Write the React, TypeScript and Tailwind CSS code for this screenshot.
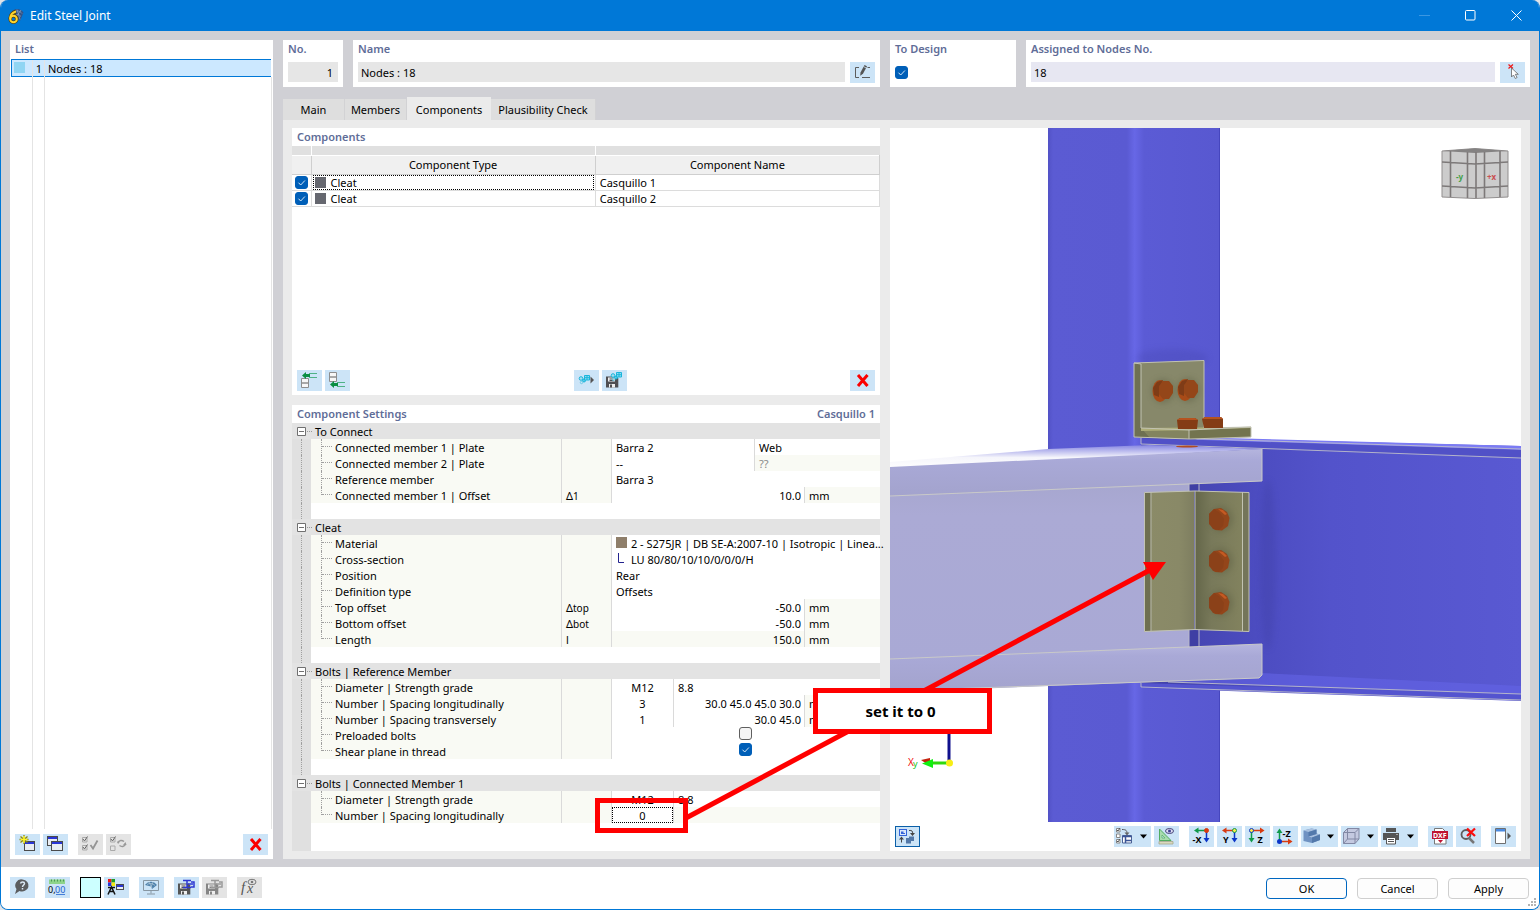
import type { ReactNode } from "react";
import clsx from "clsx";

type IconButtonProps = {
  label: string;
  children?: ReactNode;
  muted?: boolean;
  wide?: boolean;
  active?: boolean;
};

function IconButton({ label, children, muted, wide, active }: IconButtonProps) {
  return (
    <button
      type="button"
      aria-label={label}
      disabled={muted}
      className={clsx(
        "relative h-[21px] shrink-0",
        wide ? "w-[37px]" : "w-[25px]",
        muted ? "bg-[#e4e4e4]" : "bg-[#cce4f7]",
        active && "outline outline-1 -outline-offset-1 outline-[#0a5fa8]",
      )}
    >
      <svg className="block h-full w-full" viewBox={wide ? "0 0 37 21" : "0 0 25 21"} aria-hidden="true">
        {children}
        {wide && <path d="M26 8.500h7l-3.500 4z" fill="#000" />}
      </svg>
    </button>
  );
}

function Check({ label, checked = false }: { label: string; checked?: boolean }) {
  return (
    <span className="relative block size-[13px]">
      <input
        type="checkbox"
        aria-label={label}
        defaultChecked={checked}
        className="peer block size-[13px] appearance-none rounded-[3px] border border-[#5f5f5f] bg-[#f5f5f5] checked:border-[#005fb8] checked:bg-[#005fb8]"
      />
      <svg className="pointer-events-none absolute inset-0 hidden peer-checked:block" viewBox="0 0 13 13" fill="none" stroke="#d5e6f5">
        <path d="M3.500 6.700l2.200 2.300 4.200-4.500" />
      </svg>
    </span>
  );
}

function RedCross() {
  return <path d="M8 5l9.500 11M17.500 5L8 16" stroke="#fb0000" strokeWidth="3" fill="none" />;
}

function MiniWindow({ x, y, w = 11, h = 10 }: { x: number; y: number; w?: number; h?: number }) {
  return (
    <g>
      <rect x={x + 0.5} y={y + 0.5} width={w - 1} height={h - 1} fill="#e9edf2" stroke="#4b4b4b" />
      <rect x={x + 1} y={y + 1} width={w - 2} height="2" fill="#2a36d6" />
    </g>
  );
}

function Floppy({ color, badge }: { color: string; badge: ReactNode }) {
  return (
    <g>
      <path d="M4 6.500h10.500l1.800 1.800V17.500H4z" fill={color} />
      <path d="M6 7.500h7v4H6z" fill="#eee" />
      <path d="M7.500 9h4M7.500 10.500h4" stroke={color} />
      <path d="M7 14h6v3.500H7z" fill="#eee" />
      <path d="M8 14.500h2v3H8z" fill={color} />
      {badge}
    </g>
  );
}

function Nodes({ x, y }: { x: number; y: number }) {
  return (
    <g transform={`translate(${x} ${y})`} fill="none" stroke="#19b5dc">
      <circle cx="3" cy="4.500" r="1.800" fill="#a5e0f0" />
      <circle cx="6" cy="6.500" r="1.500" fill="#59cbe6" />
      <circle cx="3.500" cy="8.500" r="1.200" stroke="#6ccbe6" />
      <path d="M6.500 1.500h5v4.500h-5zM9 1.500v4.500M6.500 3.700h5" fill="#8fdcf0" />
    </g>
  );
}

function AxisIcon({ kind }: { kind: "x" | "y" | "z" | "-z" }) {
  const green = "#119a4b";
  const red = "#d83a10";
  const blue = "#0b35c8";
  const text = "font-[Noto_Sans] text-[9px] font-bold";
  if (kind === "-z") {
    return (
      <g>
        <path d="M6.500 14V6" stroke={green} strokeWidth="1.500" />
        <path d="M3.500 7l3-4.500 3 4.500z" fill={green} />
        <path d="M8 15.500h8" stroke={red} strokeWidth="1.500" />
        <path d="M15 12.500l4.500 3-4.500 3z" fill={red} />
        <circle cx="6.500" cy="15.500" r="2.500" fill={blue} />
        <text x="9.500" y="10.500" className={text}>-Z</text>
      </g>
    );
  }
  if (kind === "z") {
    return (
      <g>
        <path d="M8 4.500h8" stroke={red} strokeWidth="1.500" />
        <path d="M15 1.500l4.500 3-4.500 3z" fill={red} />
        <path d="M6.500 6v7" stroke={green} strokeWidth="1.500" />
        <path d="M3.500 12l3 4.500 3-4.500z" fill={green} />
        <circle cx="6.500" cy="4.500" r="2" fill="#ffe94a" stroke={blue} />
        <text x="12.500" y="16.500" className={text}>Z</text>
      </g>
    );
  }
  const arm = kind === "x" ? green : red;
  return (
    <g>
      <path d="M16 4.500H9" stroke={arm} strokeWidth="1.500" />
      <path d="M9.500 1.500L5 4.500l4.500 3z" fill={arm} />
      <path d="M17.500 6v7" stroke={blue} strokeWidth="1.500" />
      <path d="M14.500 12l3 4.500 3-4.500z" fill={blue} />
      <circle cx="17.500" cy="4.500" r="2" fill={kind === "x" ? red : "#ffe94a"} stroke={kind === "x" ? red : green} />
      <text x={kind === "x" ? 3.5 : 6} y="16.500" className={text}>{kind === "x" ? "-X" : "Y"}</text>
    </g>
  );
}

function Logo() {
  return (
    <svg className="size-4" viewBox="0 0 16 16" aria-hidden="true">
      <path d="M4 3.500C8-.5 13 1 15.500 4.500L12 13 8 8z" fill="#31548a" />
      <path d="M6 4c3-2 6-1 8 1.500M8 7c2-1 3-.5 5 1.500M9 1.500l3 10M13 2L8 9" stroke="#93a6bd" strokeWidth=".7" fill="none" />
      <path d="M8 3.500C4.500 4.500 2.200 7.500 2.200 10.700" stroke="#57430a" strokeWidth="3.400" fill="none" />
      <circle cx="5.500" cy="11" r="3.300" stroke="#57430a" strokeWidth="3.400" fill="none" />
      <path d="M8 3.500C4.500 4.500 2.200 7.500 2.200 10.700" stroke="#ffd52e" strokeWidth="2" fill="none" />
      <circle cx="5.500" cy="11" r="3.300" stroke="#ffd52e" strokeWidth="2" fill="none" />
    </svg>
  );
}

function TitleBar() {
  return (
    <header className="flex h-[31px] items-center bg-[#0078d7] pl-[7px] text-xs text-white">
      <Logo />
      <h1 className="ml-1.5 flex-1">Edit Steel Joint</h1>
      <button type="button" aria-label="Minimize" className="flex h-full w-[46px] items-center justify-center">
        <svg className="size-[11px]" viewBox="0 0 11 11"><path d="M0 5.500h11" stroke="#3b97e2" /></svg>
      </button>
      <button type="button" aria-label="Maximize" className="flex h-full w-[46px] items-center justify-center">
        <svg className="size-[11px]" viewBox="0 0 11 11"><rect x=".5" y=".5" width="9.500" height="9.500" rx="1" fill="none" stroke="#fff" /></svg>
      </button>
      <button type="button" aria-label="Close" className="flex h-full w-[46px] items-center justify-center">
        <svg className="size-[11px]" viewBox="0 0 11 11"><path d="M.5.5l10 10M10.500.5l-10 10" stroke="#fff" /></svg>
      </button>
    </header>
  );
}

function Heading({ children }: { children: ReactNode }) {
  return <h2 className="h-[18px] px-[5px] leading-[18px] font-semibold text-[#5f6d98]">{children}</h2>;
}

function ListPanel() {
  return (
    <section className="flex w-[263px] shrink-0 flex-col bg-white">
      <Heading>List</Heading>
      <div className="flex flex-1 flex-col px-px">
        <div className="mt-px mr-px grid h-[18px] grid-cols-[20px_12px_1fr] border-y border-l border-[#0078d7] bg-[#cce8ff] leading-[18px]">
          <span className="m-0.5 mr-[7px] h-[11px] bg-[#90d5f3]" />
          <span className="border-l border-[#e4e4e4] pr-0.5 text-right">1</span>
          <span className="border-l border-[#e4e4e4] pl-[3px]">Nodes : 18</span>
        </div>
        <div className="grid flex-1 grid-cols-[22px_12px_1fr]">
          <span className="border-r border-[#e4e4e4]" />
          <span className="border-r border-[#e4e4e4]" />
          <span className="border-r border-[#e4e4e4]" />
        </div>
      </div>
      <div className="mt-[5px] flex gap-[3px] px-[5px] pb-1">
        <IconButton label="New">
          <MiniWindow x={9} y={7} />
          <path d="M9 1v9M4.500 5.500h9M5.500 2.500l7 6M12.500 2.500l-7 6" stroke="#8d8a13" strokeWidth="1.300" />
          <path d="M9 2v7M5.500 5.500h7" stroke="#fff52c" strokeWidth="1.600" />
        </IconButton>
        <IconButton label="Copy">
          <MiniWindow x={4} y={2} />
          <MiniWindow x={8} y={7} w={12} />
        </IconButton>
        <span className="w-1" />
        <IconButton label="Select all" muted>
          <path d="M4.500 3.500h4.500v4.500H4.500zM4.500 11.500h4.500V16H4.500z" fill="none" stroke="#aaa" />
          <path d="M5 5l1.500 2L9.500 2.500M5 13l1.500 2 3-4.500" fill="none" stroke="#666" />
          <path d="M12.500 11l2.500 3.500 4.500-8" fill="none" stroke="#959595" strokeWidth="1.800" />
        </IconButton>
        <IconButton label="Invert selection" muted>
          <path d="M4.500 3.500h4.500v4.500H4.500zM4.500 12h4.500v4.500H4.500z" fill="none" stroke="#aaa" />
          <path d="M5 5l1.500 2L9.500 2.500" fill="none" stroke="#666" />
          <path d="M12 9c1-3 4-3 6-1.500M19.500 10c-1 3-4 3-6 1.500" fill="none" stroke="#999" strokeWidth="1.500" />
          <path d="M11 7.500h3L12 10zM17 11h3.500l-1-3z" fill="#999" />
        </IconButton>
        <span className="flex-1" />
        <IconButton label="Delete"><RedCross /></IconButton>
      </div>
    </section>
  );
}

function HeaderFields() {
  return (
    <div className="flex gap-2.5">
      <section className="w-[60px] shrink-0 bg-white">
        <Heading>No.</Heading>
        <input aria-label="No." readOnly defaultValue="1" className="mx-[5px] mt-1 block h-5 w-[50px] bg-[#e6e6e6] pt-px pr-[5px] text-right" />
      </section>
      <section className="min-w-0 flex-[527] bg-white pb-1">
        <Heading>Name</Heading>
        <div className="mt-1 flex gap-[5px] px-[5px]">
          <input aria-label="Name" readOnly defaultValue="Nodes : 18" className="h-5 min-w-0 flex-1 bg-[#e6e6e6] px-[3px] pt-px" />
          <IconButton label="Edit name">
            <path d="M9 5.500H5.500v10H9M12 15.500h8M17.500 5.500H20" fill="none" stroke="#5d5d5d" />
            <path d="M10.500 10.500l4-7.500 2.500 1.300-4 7.500-2.800 2z" fill="#555" />
            <path d="M13.500 4.500l2.700 1.500" stroke="#cce4f7" strokeWidth=".8" />
          </IconButton>
        </div>
      </section>
      <section className="w-[126px] shrink-0 bg-white">
        <Heading>To Design</Heading>
        <div className="px-[5px] pt-2"><Check label="To Design" checked /></div>
      </section>
      <section className="min-w-0 flex-[504] bg-white">
        <Heading>Assigned to Nodes No.</Heading>
        <div className="mt-1 flex gap-[5px] px-[5px]">
          <input aria-label="Assigned to Nodes No." defaultValue="18" className="h-5 min-w-0 flex-1 bg-[#e7e7f2] px-[3px] pt-px" />
          <IconButton label="Select nodes">
            <path d="M8.500 2.500l4.500 4M13 2.500l-4.500 4" stroke="#f01818" strokeWidth="1.200" />
            <path d="M11.500 6v9l2-2 1.800 3.500 1.800-1-1.800-3.200h3z" fill="#fff" stroke="#666" strokeWidth=".8" />
          </IconButton>
        </div>
      </section>
    </div>
  );
}

const tabs = [
  { name: "Main", width: "w-[62px]" },
  { name: "Members", width: "w-[62px]" },
  { name: "Components", width: "w-[84px]" },
  { name: "Plausibility Check", width: "w-[105px]" },
];

function Tabs() {
  return (
    <nav className="mt-2.5 flex h-[23px] items-end">
      {tabs.map(({ name, width }) => (
        <button
          key={name}
          type="button"
          className={clsx(
            "text-center whitespace-nowrap",
            width,
            name === "Components" ? "h-[23px] bg-[#ebebeb] pt-0.5" : "h-[21px] border-r border-[#d2d2d4] bg-[#dedede]",
          )}
        >
          {name}
        </button>
      ))}
    </nav>
  );
}

const components = ["Casquillo 1", "Casquillo 2"];

function ComponentsPanel() {
  return (
    <section className="flex h-[267px] flex-col bg-white">
      <Heading>Components</Heading>
      <table className="w-full table-fixed border-collapse">
        <colgroup>
          <col className="w-[19px]" />
          <col />
          <col />
        </colgroup>
        <thead className="font-normal">
          <tr className="h-[9px] bg-[#e0e0e0]">
            <td className="border-r border-white" />
            <td className="border-r border-white" />
            <td />
          </tr>
          <tr className="h-[19px] border-t border-white bg-[#f0f0f0]">
            <th className="border-r border-b border-[#cfcfcf] p-0" />
            <th className="border-r border-b border-[#cfcfcf] p-0 font-normal">Component Type</th>
            <th className="border-r border-b border-[#cfcfcf] p-0 font-normal">Component Name</th>
          </tr>
        </thead>
        <tbody>
          {components.map((name, i) => (
            <tr key={name} className="h-4 border-b border-[#dcdcdc]">
              <td className="border-r border-[#dcdcdc] p-0 pl-[3px]"><Check label={name} checked /></td>
              <td className="border-r border-[#dcdcdc] p-0 px-px">
                <div className={clsx("flex h-[15px] items-center gap-[5px] px-px leading-[15px]", i === 0 && "outline outline-1 -outline-offset-1 outline-black outline-dotted")}>
                  <span className="ml-px size-[11px] bg-[#65676f]" />
                  Cleat
                </div>
              </td>
              <td className="border-r border-[#dcdcdc] p-0 pl-1 leading-[15px]">{name}</td>
            </tr>
          ))}
        </tbody>
      </table>
      <div className="mt-auto flex gap-[3px] px-[5px] pb-1">
        <IconButton label="Insert above">
          <path d="M4.500 8.500h7v4.500h-7zM4.500 13h7v4.500h-7z" fill="#f7f7f7" stroke="#8e8e8e" />
          <path d="M12 3.500h8M12 7.500h8" stroke="#4fb286" />
          <path d="M5 5.500l4-3.500v2h4v3H9v2z" fill="#0a8f43" />
        </IconButton>
        <IconButton label="Insert below">
          <path d="M4.500 2.500h7v4.500h-7zM4.500 7h7v4.500h-7z" fill="#f7f7f7" stroke="#8e8e8e" />
          <path d="M12 12.500h8M12 16.500h8" stroke="#4fb286" />
          <path d="M5 14.500l4-3.500v2h4v3H9v2z" fill="#0a8f43" />
        </IconButton>
        <span className="flex-[221]" />
        <IconButton label="Import component">
          <Nodes x={4} y={4} />
          <path d="M16.500 6.500l3.500 3.500-3.500 3.500z" fill="#555" />
        </IconButton>
        <IconButton label="Save component">
          <Floppy color="#4f4f52" badge={<Nodes x={8} y={1} />} />
        </IconButton>
        <span className="flex-[220]" />
        <IconButton label="Delete component"><RedCross /></IconButton>
      </div>
    </section>
  );
}

type Cell = { text: ReactNode; span: number; align?: "right" | "center"; shade?: boolean };
type Row = { label: string; symbol?: ReactNode; cells: Cell[] };

const plain = (text: ReactNode): Cell[] => [{ text, span: 4 }];
const measure = (text: string, shade = false): Cell[] => [
  { text, span: 3, align: "right", shade },
  { text: "mm", span: 1, shade: true },
];
const spacing = (count: string, text: string): Cell[] => [
  { text: count, span: 1, align: "center" },
  { text, span: 2, align: "right" },
  { text: "mm", span: 1, shade: true },
];
const bolt: Cell[] = [
  { text: "M12", span: 1, align: "center" },
  { text: "8.8", span: 3 },
];
const delta = (sub: string) => (
  <>
    Δ<sub className="bottom-0 text-[10px]">{sub}</sub>
  </>
);

const groups: { title: string; rows: Row[] }[] = [
  {
    title: "To Connect",
    rows: [
      { label: "Connected member 1 | Plate", cells: [{ text: "Barra 2", span: 2 }, { text: "Web", span: 2 }] },
      {
        label: "Connected member 2 | Plate",
        cells: [{ text: "--", span: 2 }, { text: <span className="text-[#8a8a8a]">??</span>, span: 2, shade: true }],
      },
      { label: "Reference member", cells: plain("Barra 3") },
      { label: "Connected member 1 | Offset", symbol: delta("1"), cells: measure("10.0") },
    ],
  },
  {
    title: "Cleat",
    rows: [
      {
        label: "Material",
        cells: plain(
          <span className="flex gap-1 whitespace-nowrap">
            <span className="mt-0.5 size-[11px] shrink-0 bg-[#8f7f6b]" />
            2 - S275JR | DB SE-A:2007-10 | Isotropic | Linea...
          </span>,
        ),
      },
      {
        label: "Cross-section",
        cells: plain(
          <span className="flex gap-1 whitespace-nowrap">
            <svg className="mt-0.5 size-[11px]" viewBox="0 0 11 11"><path d="M2.500 0v9.500H8" fill="none" stroke="#23238e" /></svg>
            LU 80/80/10/10/0/0/0/H
          </span>,
        ),
      },
      { label: "Position", cells: plain("Rear") },
      { label: "Definition type", cells: plain("Offsets") },
      { label: "Top offset", symbol: delta("top"), cells: measure("-50.0") },
      { label: "Bottom offset", symbol: delta("bot"), cells: measure("-50.0") },
      { label: "Length", symbol: "l", cells: measure("150.0", true) },
    ],
  },
  {
    title: "Bolts | Reference Member",
    rows: [
      { label: "Diameter | Strength grade", cells: bolt },
      { label: "Number | Spacing longitudinally", cells: spacing("3", "30.0 45.0 45.0 30.0") },
      { label: "Number | Spacing transversely", cells: spacing("1", "30.0 45.0") },
      { label: "Preloaded bolts", cells: [{ text: <Check label="Preloaded bolts" />, span: 4, align: "center" }] },
      { label: "Shear plane in thread", cells: [{ text: <Check label="Shear plane in thread" checked />, span: 4, align: "center" }] },
    ],
  },
  {
    title: "Bolts | Connected Member 1",
    rows: [
      { label: "Diameter | Strength grade", cells: bolt },
      {
        label: "Number | Spacing longitudinally",
        cells: [
          {
            text: (
              <input
                aria-label="Number of bolts longitudinally"
                defaultValue="0"
                className="block h-4 w-full bg-white pt-0.5 text-center outline outline-1 -outline-offset-1 outline-black outline-dotted"
              />
            ),
            span: 1,
            align: "center",
          },
          { text: "", span: 3, shade: true },
        ],
      },
    ],
  },
];

function SettingsGroup({ title, rows, last }: { title: string; rows: Row[]; last: boolean }) {
  const trunk = "bg-[#e0e0e0] p-0";
  return (
    <tbody>
      <tr className="h-4 bg-[#e3e3e3]">
        <th colSpan={7} className="p-0 text-left font-normal">
          <button type="button" className="flex h-4 w-full items-center pl-[5px]">
            <svg className="size-[9px]" viewBox="0 0 9 9"><path d="M.5.5h8v8h-8zM2 4.500h5" fill="#fff" stroke="#707070" /></svg>
            <span className="mr-[3px] ml-px w-[5px] border-t border-dotted border-[#999]" />
            <span className="pt-0.5">{title}</span>
          </button>
        </th>
      </tr>
      {rows.map((row, i) => (
        <tr key={row.label} className="h-4">
          <td className={trunk}>
            <div className={clsx("ml-[9px] h-4", !last && "border-l border-dotted border-[#a0a0a0]")} />
          </td>
          <td className="bg-[#f9faf4] p-0">
            <div className="flex h-4 pl-2.5">
              <span className={clsx("w-px border-l border-dotted border-[#a0a0a0]", i === rows.length - 1 ? "h-2" : "h-4")} />
              <span className="mr-[3px] h-2 w-2.5 border-b border-dotted border-[#a0a0a0]" />
              <span className="leading-[18px] whitespace-nowrap">{row.label}</span>
            </div>
          </td>
          <td className="border-l border-[#dadada] bg-[#f9faf4] p-0 pl-1">
            <div className="h-4 leading-[18px]">{row.symbol}</div>
          </td>
          {row.cells.map((cell, c) => (
            <td
              key={c}
              colSpan={cell.span}
              className={clsx(
                "border-l border-[#dadada] p-0",
                cell.shade && "bg-[#f9faf4]",
                !cell.align && "pl-1",
                cell.align === "right" && "pr-[3px] text-right",
                cell.align === "center" && "text-center",
              )}
            >
              <div className={clsx("h-4 leading-[18px]", cell.align === "center" && cell.span === 4 && "flex items-start justify-center")}>{cell.text}</div>
            </td>
          ))}
        </tr>
      ))}
      {!last && (
        <tr className="h-4">
          <td className={trunk}><div className="ml-[9px] h-4 border-l border-dotted border-[#a0a0a0]" /></td>
          <td colSpan={6} />
        </tr>
      )}
    </tbody>
  );
}

function SettingsPanel() {
  return (
    <section className="mt-2.5 flex flex-1 flex-col bg-white">
      <div className="flex justify-between">
        <Heading>Component Settings</Heading>
        <Heading>Casquillo 1</Heading>
      </div>
      <table className="w-full table-fixed border-separate border-spacing-0">
        <colgroup>
          <col className="w-[19px]" />
          <col />
          <col className="w-[50px]" />
          <col className="w-[62px]" />
          <col className="w-[81px]" />
          <col className="w-[50px]" />
          <col className="w-[76px]" />
        </colgroup>
        {groups.map((group, i) => (
          <SettingsGroup key={group.title} {...group} last={i === groups.length - 1} />
        ))}
      </table>
      <div className="w-[19px] flex-1 bg-[#e0e0e0]" />
    </section>
  );
}

function Bolt({ x, y }: { x: number; y: number }) {
  return (
    <g>
      <ellipse cx={x + 2} cy={y} rx="12" ry="13" fill="#4e4f35" opacity=".3" filter="url(#soft)" />
      <path d={`M${x - 10} ${y - 5}l5-5 7-1 6 4 2.500 6-1.500 8-6 4.500-7-.5-6-6z`} fill="#93451a" />
      <path d={`M${x - 1} ${y - 10}l5 1 4 4-2 1z`} fill="#c55a22" />
      <path d={`M${x - 10} ${y - 5}l5-5 6 4 4 6-1 7-4 4-6-1-4-6z`} fill="#8b4119" />
    </g>
  );
}

function SideBolt({ x, y }: { x: number; y: number }) {
  return (
    <g>
      <ellipse cx={x} cy={y} rx="11" ry="12" fill="#4e4f35" opacity=".35" filter="url(#soft)" />
      <ellipse cx={x - 3} cy={y} rx="7.500" ry="11" fill="#a84b18" />
      <path d={`M${x - 10} ${y - 3}l4-6 6-2-4 9v8l-5-2z`} fill="#7f3c17" />
      <path d={`M${x - 4} ${y - 5}l4-5 6 0 4 5v7l-4 6h-6l-4-5z`} fill="#944619" />
    </g>
  );
}

function Scene() {
  return (
    <svg className="block min-h-0 w-full flex-1" viewBox="890 128 631 694" preserveAspectRatio="xMidYMid slice" role="img" aria-label="Steel joint">
      <defs>
        <linearGradient id="column">
          <stop offset="0" stopColor="#5252c6" />
          <stop offset=".03" stopColor="#5b5bd3" />
          <stop offset=".46" stopColor="#5a5ad2" />
          <stop offset=".505" stopColor="#6767e6" />
          <stop offset=".56" stopColor="#5b5bd5" />
          <stop offset="1" stopColor="#5858d0" />
        </linearGradient>
        <linearGradient id="web">
          <stop offset="0" stopColor="#4040a6" />
          <stop offset=".3" stopColor="#4c4cc0" />
          <stop offset=".5" stopColor="#5353cb" />
          <stop offset="1" stopColor="#5959d2" />
        </linearGradient>
        <linearGradient id="lilac" x2="0" y2="1">
          <stop offset="0" stopColor="#b5b5de" />
          <stop offset=".25" stopColor="#a9a9d7" />
          <stop offset="1" stopColor="#a3a3cd" />
        </linearGradient>
        <linearGradient id="lilacWeb" x2="0" y2="1">
          <stop offset="0" stopColor="#a6a6ce" />
          <stop offset=".2" stopColor="#abaad5" />
          <stop offset="1" stopColor="#a9a9d5" />
        </linearGradient>
        <linearGradient id="topFace" x2="0" y2="1">
          <stop offset="0" stopColor="#8585e2" />
          <stop offset=".5" stopColor="#f5f5fb" />
          <stop offset="1" stopColor="#fff" />
        </linearGradient>
        <linearGradient id="cleatFace">
          <stop offset="0" stopColor="#8b8b68" />
          <stop offset=".7" stopColor="#898967" />
          <stop offset="1" stopColor="#7e7e60" />
        </linearGradient>
        <linearGradient id="cleatRight">
          <stop offset="0" stopColor="#646649" />
          <stop offset=".3" stopColor="#78795a" />
          <stop offset="1" stopColor="#84845f" />
        </linearGradient>
        <filter id="soft" x="-50%" y="-50%" width="200%" height="200%"><feGaussianBlur stdDeviation="3" /></filter>
      </defs>
      <rect width="631" height="694" x="890" y="128" fill="#fff" />
      <path d="M1048 128H1219.500V822H1048z" fill="url(#column)" />
      <path d="M1219.500 128V822" stroke="#4646be" />
      <ellipse cx="1172" cy="358" rx="36" ry="9" fill="#4040a5" opacity=".25" filter="url(#soft)" />

      {/* beam behind the column */}
      <path d="M1141 437L1521 446V700L1141 687z" fill="url(#web)" />
      <path d="M1190 437L1521 446V450L1200 441z" fill="#7b7bf4" />
      <path d="M1141 438L1521 450V458L1141 445z" fill="#5151c7" />
      <path d="M1262 673L1521 686V694L1168 682z" fill="#6464e6" opacity=".6" />
      <path d="M1141 683L1521 695V701L1141 688z" fill="#5454cf" />
      <path d="M1141 437L1521 449M1141 438v6L1521 458M1168 682L1521 694M1141 683v4L1521 700" fill="none" stroke="#bebeca" strokeWidth=".9" />
      <ellipse cx="1268" cy="565" rx="8" ry="85" fill="#35358d" opacity=".2" filter="url(#soft)" />

      {/* front beam */}
      <path d="M890 462L1048 449 1150 445 1262 449 890 470z" fill="url(#topFace)" />
      <path d="M890 490L1189 478V655L890 665z" fill="url(#lilacWeb)" />
      <path d="M1189 478h10v174h-10z" fill="#3f3fa4" />
      <path d="M1189 478v174M1199 478v174" stroke="#b9b9c9" />
      <path d="M890 467L1262 449V481L890 496z" fill="url(#lilac)" />
      <path d="M890 496L1262 481V449" fill="none" stroke="#c9c9c8" />
      <path d="M890 659L1262 644V675l-3 3L890 692z" fill="url(#lilac)" />
      <path d="M890 659L1262 644V675l-3 3L890 691" fill="none" stroke="#c9c9c8" />
      <ellipse cx="1187" cy="446.500" rx="11" ry="1" fill="#b14b20" />

      {/* upper cleat */}
      <path d="M1134 363L1204 360.500V428L1251 427V437L1189 439 1134 437z" fill="#83845f" />
      <path d="M1134 363L1141 364V428L1150 438 1134 437z" fill="#6e7052" />
      <path d="M1141 363L1204 361V428H1141z" fill="#87886a" />
      <path d="M1141 428L1251 427V429L1141 431z" fill="#aeae79" />
      <path d="M1189 430L1251 428V437L1189 439z" fill="#73744f" />
      <path d="M1141 428V364L1134 363V437L1189 439 1251 437V427L1204 428V360.500L1134 363M1141 428L1189 430 1251 427M1189 430v9" fill="none" stroke="#c2c3b3" />
      <SideBolt x={1163} y={391} />
      <SideBolt x={1188} y={390} />
      <path d="M1177 420l3-2h15l3 2-1 9h-19zM1202 419l3-2h16l2 2v9h-19z" fill="#843c15" />
      <path d="M1177 420l3-2h15l3 2zM1202 419l3-2h16l2 2z" fill="#b55320" />

      {/* lower cleat */}
      <path d="M1144 492.500L1194 491V629.500L1144 631.500z" fill="url(#cleatFace)" />
      <path d="M1144.500 493h7v138h-7z" fill="#6e6f50" />
      <path d="M1195 491L1249 492.500V631.500L1195 629.500z" fill="url(#cleatRight)" />
      <path d="M1243 492.500h6v139h-6z" fill="#74755a" />
      <path d="M1144.500 492.500L1195 491 1249 492.500V631.500L1195 629.500 1144.500 631.500zM1151 492v139M1195 491v138M1242.500 492v139" fill="none" stroke="#c2c3b3" />
      <Bolt x={1219} y={519} />
      <Bolt x={1219} y={561} />
      <Bolt x={1219} y={603} />

      {/* navigation cube */}
      <path d="M1442 151L1475 148.500 1508 151V197L1475 198.500 1442 197z" fill="#ccc" stroke="#928f8f" strokeLinejoin="round" />
      <path d="M1442 151L1475 148.500 1508 151 1475 153z" fill="#848282" />
      <path d="M1442 162L1475 164 1508 162M1442 186L1475 188 1508 186M1450.500 151v46M1467.500 152v46M1476 152v46M1484.500 152v46M1500 151v46" fill="none" stroke="#7d7979" strokeWidth="1.600" />
      <text x="1456" y="180" fill="#43a047" className="text-[8px] font-bold">-y</text>
      <text x="1487" y="180" fill="#c95050" className="text-[8px] font-bold">+x</text>

      {/* axes */}
      <path d="M949 700v63" stroke="#10108c" strokeWidth="3" />
      <path d="M949 763H930" stroke="#2fd80d" strokeWidth="3" />
      <path d="M921 760l9-2v8z" fill="#c5220d" />
      <path d="M922 763.500l11-4.500v9z" fill="#12ee12" />
      <circle cx="949.500" cy="763" r="3.500" fill="#f7ee15" />
      <text x="908" y="766" fill="#f01010" className="text-[10px]">X</text>
      <text x="913" y="767" fill="#18c518" className="text-[9px]">y</text>
    </svg>
  );
}

function Viewer() {
  return (
    <section className="flex min-w-0 flex-[631] flex-col bg-white">
      <Scene />
      <div className="flex gap-[3px] px-[5px] pt-1 pb-1">
        <IconButton label="Switch view" active>
          <rect x="4.500" y="3.500" width="7" height="6" fill="#dbe9fb" stroke="#3464d8" />
          <path d="M6 8V5.500h2.500V7H10v1z" fill="#3464d8" />
          <path d="M14 4.500c3-.5 4 1 3.500 3M6.500 16.500V12" fill="none" stroke="#444" />
          <path d="M15 7h5l-2.500 3zM4 13.500l2.500-3 2.500 3z" fill="#444" />
          <path d="M11 12h3v-1.500h5V15h-3v2.500h-5z" fill="#5278a8" />
        </IconButton>
        <span className="flex-1" />
        <IconButton label="Display options" wide>
          <path d="M2.500 2.500h3.500v3.500H2.500zM2.500 8h3.500v3.500H2.500zM2.500 13.500h3.500V17H2.500z" fill="#fff" stroke="#888" />
          <path d="M3 4l1 1 2-3M3 15l1 1 2-3M8 3.500c4 0 5 1 5 4" fill="none" stroke="#555" />
          <path d="M10.500 6.500h5l-2.500 3z" fill="#666" />
          <path d="M8.500 9.500h9V17h-9z" fill="#fff" stroke="#4b6296" />
          <path d="M8.500 10.500h9M11.500 10.500V17M12 14.500h5" fill="none" stroke="#3b5596" strokeWidth="1.500" />
        </IconButton>
        <IconButton label="Dimensions">
          <path d="M5.500 3l11.500 11.500H5.500z" fill="#a8dcae" stroke="#51ad61" />
          <path d="M8 9v3h3z" fill="#cce4f7" stroke="#51ad61" strokeWidth=".7" />
          <path d="M5 15.500h14V18H5z" fill="#d9d9bf" stroke="#a6a68b" strokeWidth=".8" />
          <ellipse cx="15.500" cy="5" rx="4" ry="2.500" fill="#dfe1f6" stroke="#454579" />
          <circle cx="15.500" cy="5" r="1.500" fill="#3f3f91" />
        </IconButton>
        <span className="w-1" />
        <IconButton label="View in -X"><AxisIcon kind="x" /></IconButton>
        <IconButton label="View in Y"><AxisIcon kind="y" /></IconButton>
        <IconButton label="View in Z"><AxisIcon kind="z" /></IconButton>
        <IconButton label="View in -Z"><AxisIcon kind="-z" /></IconButton>
        <IconButton label="Isometric view" wide>
          <path d="M2.500 4.500l8-2 5 1v4l3.500 1v5.500l-8 3-8.500-2z" fill="#6f92c2" />
          <path d="M2.500 4.500l8-2 5 1-8 2.500zM7.500 10.500l8-2.500 3.500.5-8 3z" fill="#a9c1df" />
          <path d="M7.500 6l8-2.500V8l-8 2.500zM11 11.500l8-3V14l-8 3z" fill="#5379ab" />
        </IconButton>
        <IconButton label="Render mode" wide>
          <path d="M2.500 6.500l4-4H18v10.500l-4 4.500H2.500z" fill="#c4c9e0" />
          <path d="M2.500 6.500H14v11H2.500zM6.500 2.500H18V13H6.500zM2.500 6.500l4-4M14 6.500l4-4M14 17.500l4-4.500M2.500 17.500l4-4.500" fill="none" stroke="#8288a4" />
        </IconButton>
        <IconButton label="Print" wide>
          <path d="M5 2h10v4H5zM2 7h16v7H2z" fill="#555" />
          <path d="M5.500 11.500h9v6.500h-9z" fill="#fff" stroke="#555" />
          <path d="M7 13.500h6M7 15.500h6" stroke="#555" />
          <path d="M15.500 8.500h1" stroke="#fff" />
        </IconButton>
        <span className="w-1" />
        <IconButton label="Export DXF">
          <path d="M6.500 2.500h8l3.500 3.500v12H6.500z" fill="#fff" stroke="#777" />
          <path d="M4 5h16v8H4z" fill="#bf1432" />
          <text x="5" y="11.500" fill="#fff" className="text-[7px] font-bold">DXF</text>
          <path d="M10 14h5l-2.500 3z" fill="#bf1432" />
        </IconButton>
        <IconButton label="Reset zoom">
          <circle cx="10" cy="8.500" r="4.500" fill="none" stroke="#5e5e5e" strokeWidth="1.800" />
          <path d="M13 12l5 5" stroke="#777" strokeWidth="2.500" />
          <path d="M11 2.500l8 7.500M19 2.500L11 10" stroke="#fb0d0d" strokeWidth="2.300" />
        </IconButton>
        <span className="w-1" />
        <IconButton label="Toggle panel">
          <path d="M4.500 2.500h10v15h-10z" fill="#fff" stroke="#6f6f6f" />
          <path d="M5 3h9v2.500H5z" fill="#4b8ae0" />
          <path d="M16.500 6.500L20 10l-3.500 3.500z" fill="#555" />
        </IconButton>
      </div>
    </section>
  );
}

function IBeamBadge({ color }: { color: string }) {
  return <path d="M9 3.500h8M13 3.500v7M9 10.500h8M17 5h3v5h-3M14 7h5" fill="none" stroke={color} strokeWidth="1.500" />;
}

function Footer() {
  const dialogButton = "h-[21px] w-[81px] rounded border bg-[#fdfdfd]";
  return (
    <footer className="relative flex h-[42px] items-start gap-[3px] bg-white pt-2.5 pr-2.5 pl-[9px]">
      <IconButton label="Help">
        <path d="M12.500 2.500a6.500 6 0 1 1-3 11.500L5 17l1.500-5a6 6 0 0 1 6-9.500z" fill="#5b5d5f" />
        <path d="M10.500 6.500c.5-2 4-2 4 0 0 1.500-2 1.500-2 3.500M12.500 11v1.500" fill="none" stroke="#dbe8f4" strokeWidth="1.500" />
      </IconButton>
      <span className="w-1" />
      <IconButton label="Units">
        <path d="M4 2.500h16v4.500H4z" fill="#8ed48b" />
        <path d="M6.500 2.500v2M9.500 2.500v2M12.500 2.500v2M15.500 2.500v2M18.500 2.500v2" stroke="#4a9a54" />
        <text x="3" y="15.500" className="text-[9px]">0,</text>
        <text x="10" y="15.500" fill="#2263cf" className="text-[9px]">00</text>
        <path d="M11 17.500h9" stroke="#2263cf" strokeWidth=".8" />
      </IconButton>
      <span className="w-1" />
      <button type="button" aria-label="Color" className="size-[21px] border border-black bg-[#ccffff]" />
      <IconButton label="Display properties">
        <path d="M4 2h3.500v3.500H4z" fill="#f01616" />
        <path d="M7.500 2H11v3.500H7.500z" fill="#1b9c26" />
        <path d="M4 5.500h3.500V9H4z" fill="#2733d8" />
        <path d="M7.500 5.500H11V9H7.500z" fill="#f6e80e" />
        <path d="M4 17.500L7.500 10l3.500 7.500M5.500 14.500h4M4 10.500h7" fill="none" stroke="#111" strokeWidth="1.500" />
        <MiniWindow x={12} y={7} w={8} h={6} />
      </IconButton>
      <span className="w-1" />
      <IconButton label="Show in model">
        <path d="M4.500 3.500h15v10h-15zM12 13.500v3M8 17h8" fill="none" stroke="#8796a2" />
        <path d="M6 8c3-4.500 9-4.500 12 0l-5 4-1-2.500z" fill="#4f81ab" />
        <path d="M8 7.500c3-1.500 5-1.500 8 1M10 5l3 6M14 5l-2 5" fill="none" stroke="#b8cbd9" strokeWidth=".7" />
      </IconButton>
      <span className="w-1" />
      <IconButton label="Save as template"><Floppy color="#555" badge={<IBeamBadge color="#2d37d2" />} /></IconButton>
      <IconButton label="Load template" muted><Floppy color="#858585" badge={<IBeamBadge color="#999" />} /></IconButton>
      <span className="w-1" />
      <IconButton label="Formula" muted>
        <text x="4" y="15" fill="#555" className="font-[Liberation_Serif] text-[15px] italic">f</text>
        <text x="10" y="16" fill="#555" className="font-[Liberation_Serif] text-[14px] italic">x</text>
        <ellipse cx="15" cy="5" rx="4" ry="2.700" fill="none" stroke="#777" />
        <circle cx="15" cy="5" r="1.300" fill="#777" />
      </IconButton>
      <span className="flex-1" />
      <div className="flex gap-2.5 pt-px">
        <button type="button" className={clsx(dialogButton, "border-[#0067c0]")}>OK</button>
        <button type="button" className={clsx(dialogButton, "border-[#cfcfcf]")}>Cancel</button>
        <button type="button" className={clsx(dialogButton, "border-[#cfcfcf]")}>Apply</button>
      </div>
      <svg className="absolute right-0.5 bottom-0.5 size-[9px]" viewBox="0 0 9 9" fill="#b3b3b3">
        <path d="M6 0h2v2H6zM3 3h2v2H3zM6 3h2v2H6zM0 6h2v2H0zM3 6h2v2H3zM6 6h2v2H6z" />
      </svg>
    </footer>
  );
}

function Annotation() {
  return (
    <div className="pointer-events-none absolute inset-0 overflow-hidden">
      <svg className="absolute top-[550px] left-[679px] h-[280px] w-[500px]" viewBox="680 550 500 280">
        <path d="M686 818L1150 570" stroke="#f00" strokeWidth="5" />
        <path d="M1166 562L1143 562 1153 580z" fill="#f00" />
      </svg>
      <div className="absolute top-[798px] left-[594px] h-[35px] w-[93px] border-5 border-[#f00]" />
      <p className="absolute top-[688px] left-[812px] flex h-[46px] w-[179px] items-center justify-center border-5 border-[#f00] bg-white pr-1 text-[15px] font-bold">
        set it to 0
      </p>
    </div>
  );
}

export default function App() {
  return (
    <div className="bg-[#dfe3e8] font-['Noto_Sans',sans-serif] text-[11px] leading-4 text-black">
      <div className="relative flex min-h-screen flex-col overflow-hidden rounded-lg border-x border-b border-[#0078d7] bg-[#d0d0d5]">
        <TitleBar />
        <main className="flex flex-1 gap-2.5 px-[9px] pt-[9px] pb-2">
          <ListPanel />
          <div className="flex min-w-0 flex-1 flex-col">
            <HeaderFields />
            <Tabs />
            <div className="flex flex-1 gap-2.5 bg-[#ebebeb] px-[9px] py-2">
              <div className="flex min-w-0 flex-[588] flex-col">
                <ComponentsPanel />
                <SettingsPanel />
              </div>
              <Viewer />
            </div>
          </div>
        </main>
        <Footer />
        <Annotation />
      </div>
    </div>
  );
}
